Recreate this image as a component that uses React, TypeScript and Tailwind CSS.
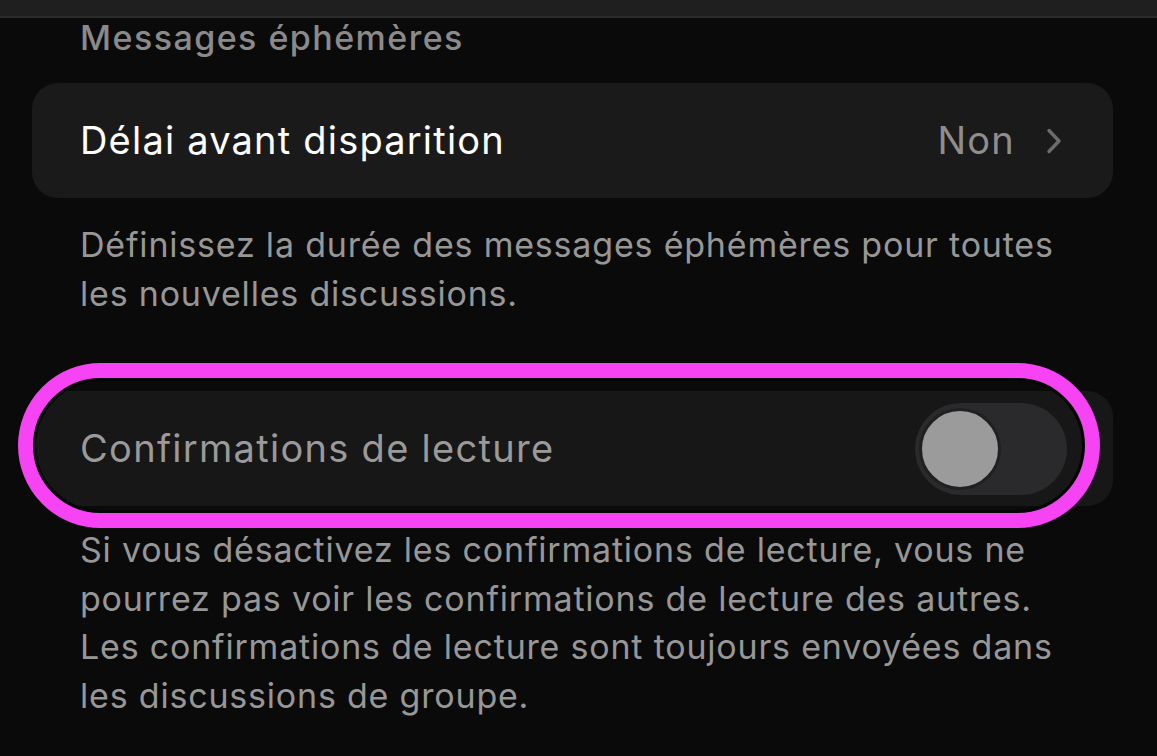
const FONT = { fontFamily: 'Inter, "Noto Sans", "Liberation Sans", sans-serif' }

function Chevron() {
  return (
    <svg width="16" height="26" viewBox="0 0 16 26" fill="none" className="text-[#6c6c6e]">
      <path d="M3 2.5 13 13 3 23.5" stroke="currentColor" strokeWidth="3.4" strokeLinecap="round" strokeLinejoin="round" />
    </svg>
  )
}

function Toggle() {
  return (
    <div className="flex h-[92px] w-[152px] items-center rounded-full bg-[#2a2a2d] px-[4px]">
      <div className="h-[82px] w-[82px] rounded-full border-[3px] border-[#202022] bg-[#9b9b9b]" />
    </div>
  )
}

export default function App() {
  return (
    <div className="h-[756px] w-[1157px] overflow-hidden bg-[#0a0a0a]" style={FONT}>
      {/* navigation bar edge */}
      <div className="h-[18px] border-b-2 border-[#2b2b2b] bg-[#1f1f1f]" />

      <div className="pl-[80px] pt-[2px] text-[34px] leading-[36px] font-medium tracking-[1.45px] text-[#8a8a8a]">
        Messages éphémères
      </div>

      <div className="ml-[32px] mt-[27px] flex h-[115px] w-[1081px] items-center justify-between rounded-[26px] bg-[#1a1a1a] pl-[48px] pr-[51px]">
        <span className="text-[38px] tracking-[1.2px] text-white">Délai avant disparition</span>
        <div className="flex items-center gap-[31px]">
          <span className="text-[38px] tracking-[1.2px] text-[#8e8e8e]">Non</span>
          <Chevron />
        </div>
      </div>

      <p className="mt-[22px] pl-[80px] text-[34px] leading-[49px] tracking-[0.8px] text-[#979797]">
        Définissez la durée des messages éphémères pour toutes
        <br />
        les nouvelles discussions.
      </p>

      <div className="relative ml-[32px] mt-[73px] w-[1081px]">
        <div className="flex h-[115px] items-center justify-between rounded-[26px] bg-[#171717] pl-[48px] pr-[46px]">
          <span className="text-[38px] tracking-[1.3px] text-[#9a9a9a]">Confirmations de lecture</span>
          <Toggle />
        </div>
        {/* highlight ring drawn over the row */}
        <div className="pointer-events-none absolute -left-[14px] -top-[28px] h-[165px] w-[1082px] rounded-full border-[15px] border-[#f643f3] shadow-[inset_0_0_0_3px_#050505]" />
      </div>

      <p className="mt-[20px] pl-[80px] text-[34px] leading-[48.5px] tracking-[0.8px] text-[#979797]">
        Si vous désactivez les confirmations de lecture, vous ne
        <br />
        pourrez pas voir les confirmations de lecture des autres.
        <br />
        Les confirmations de lecture sont toujours envoyées dans
        <br />
        les discussions de groupe.
      </p>
    </div>
  )
}
